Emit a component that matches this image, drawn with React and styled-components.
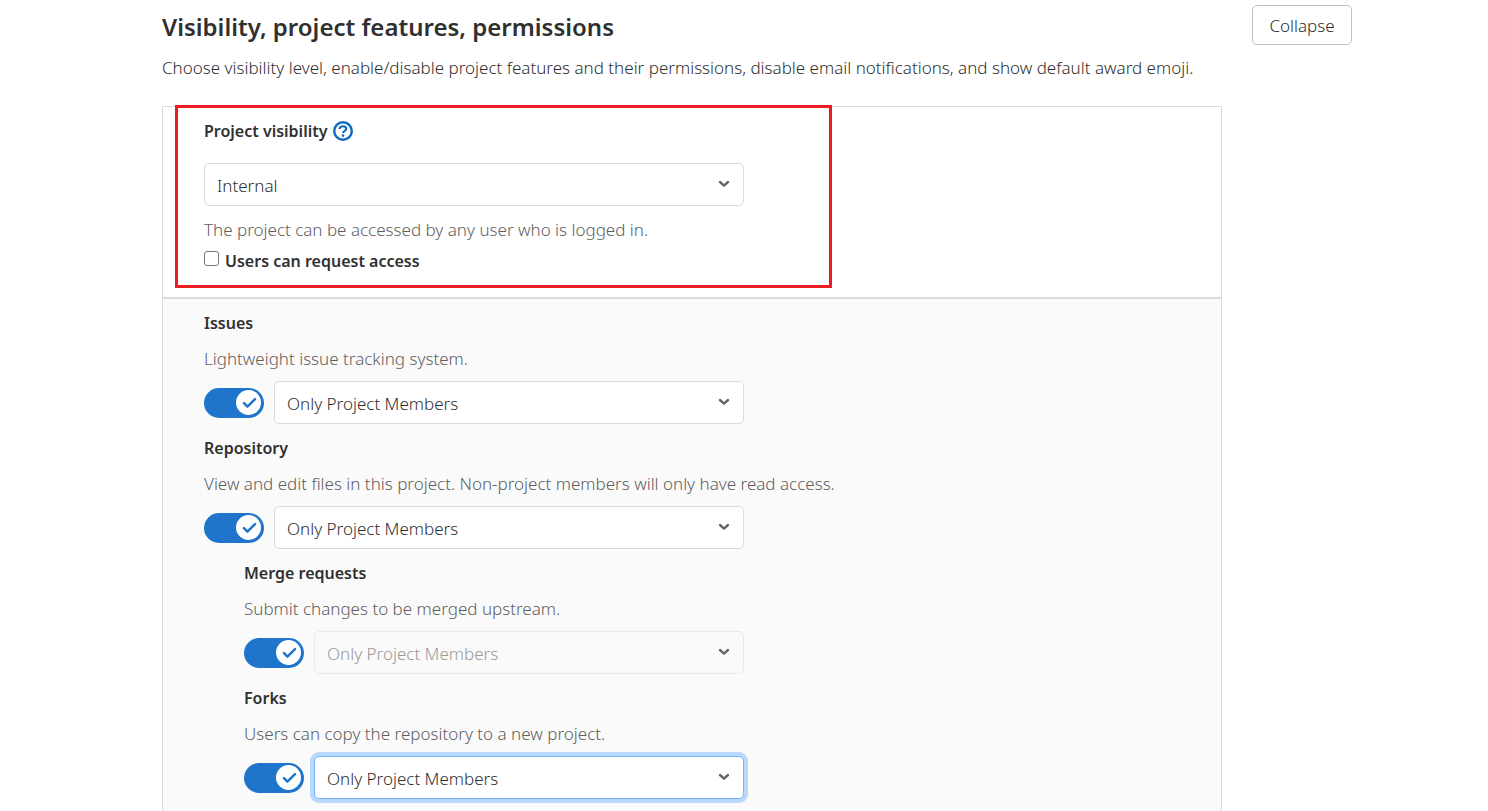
import React, { useState } from "react";
import styled, { createGlobalStyle, css } from "styled-components";

const GlobalStyle = createGlobalStyle`
  *, *::before, *::after { box-sizing: border-box; }
  body {
    margin: 0;
    background: #fff;
    color: #303030;
    font-family: "Segoe UI", "Noto Sans", "Open Sans", sans-serif;
    font-size: 17px;
    font-weight: 300;
    line-height: 24px;
  }
  h1, h2, p { margin: 0; }
  button, select, input { font: inherit; color: inherit; }
`;

const Page = styled.main`
  padding: 5px 136px 0 162px;
`;

const Header = styled.header`
  display: flex;
  justify-content: space-between;
  align-items: flex-start;
`;

const Title = styled.h1`
  padding-top: 6px;
  font-size: 24px;
  font-weight: 600;
  line-height: 32px;
`;

const CollapseButton = styled.button`
  min-width: 100px;
  height: 40px;
  padding: 2px 16px 0;
  border: 1px solid #bfbfbf;
  border-radius: 5px;
  background: #fff;
  cursor: pointer;
`;

const Intro = styled.p`
  margin-top: 11px;
`;

const Panel = styled.section`
  position: relative;
  max-width: 1060px;
  margin-top: 26px;
  border: 1px solid #dbdbdb;
  border-bottom: 0;
`;

const VisibilitySection = styled.div`
  padding: 12px 41px 24px;
  border-bottom: 2px solid #dbdbdb;
`;

const FeatureSection = styled.div`
  display: flex;
  flex-direction: column;
  gap: 12px;
  padding: 12px 41px;
  background: #fafafa;
`;

const Highlight = styled.div`
  position: absolute;
  top: -2px;
  left: 12px;
  width: 657px;
  height: 183px;
  border: 3px solid #ed1c24;
  pointer-events: none;
`;

const FieldHeading = styled.div`
  display: flex;
  align-items: center;
  gap: 6px;
`;

const FieldLabel = styled.label`
  font-size: 16px;
  font-weight: 600;
`;

const HelpLink = styled.a`
  display: flex;
  color: #1068bf;
`;

const HelpText = styled.p`
  color: #5e5e5e;
`;

const SelectWrap = styled.div`
  position: relative;
  flex: 1;
`;

const Select = styled.select`
  display: block;
  width: 100%;
  height: 43px;
  padding: 2px 40px 0 12px;
  border: 1px solid #dbdbdb;
  border-radius: 5px;
  outline: 0;
  background: #fff;
  appearance: none;

  &:disabled {
    border-color: #e9e9e9;
    background: #fafafa;
    color: #999;
    opacity: 1;
  }

  ${({ $active }) => $active && css`
    border-color: #73b3fb;
    box-shadow: 0 0 0 4px #b9d8fb;
  `}
`;

const Chevron = styled.svg`
  position: absolute;
  top: 17px;
  right: 14px;
  pointer-events: none;
`;

const VisibilityControl = styled.div`
  display: flex;
  max-width: 540px;
  margin: 20px 0 12px;
`;

const CheckboxRow = styled.div`
  display: flex;
  align-items: center;
  gap: 6px;
  margin-top: 7px;
`;

const Checkbox = styled.input`
  appearance: none;
  width: 15px;
  height: 15px;
  margin: 0 0 5px;
  border: 1px solid #767676;
  border-radius: 3px;
  background: #fff;

  &:checked { background: #1f75cb; }
`;

const Feature = styled.div`
  padding-left: ${({ $nested }) => ($nested ? "40px" : "0")};
`;

const FeatureText = styled(HelpText)`
  margin: 12px 0 10px;
`;

const Controls = styled.div`
  display: flex;
  align-items: center;
  gap: 10px;
  max-width: ${({ $nested }) => ($nested ? "500px" : "540px")};
`;

const Toggle = styled.button`
  display: flex;
  justify-content: ${({ $on }) => ($on ? "flex-end" : "flex-start")};
  align-items: center;
  width: 60px;
  height: 30px;
  padding: 0 3px;
  border: 0;
  border-radius: 15px;
  background: ${({ $on }) => ($on ? "#1f75cb" : "#868686")};
  cursor: pointer;
`;

const ToggleKnob = styled.svg`
  display: block;
`;

const FEATURES = [
  { id: "issues", name: "Issues", text: "Lightweight issue tracking system." },
  {
    id: "repository",
    name: "Repository",
    text: "View and edit files in this project. Non-project members will only have read access.",
  },
  {
    id: "merge-requests",
    name: "Merge requests",
    text: "Submit changes to be merged upstream.",
    nested: true,
    disabled: true,
  },
  {
    id: "forks",
    name: "Forks",
    text: "Users can copy the repository to a new project.",
    nested: true,
    active: true,
  },
];

function Dropdown({ id, options, disabled, active }) {
  return (
    <SelectWrap>
      <Select id={id} disabled={disabled} $active={active} defaultValue={options[0]}>
        {options.map((option) => (
          <option key={option}>{option}</option>
        ))}
      </Select>
      <Chevron width="12" height="8" viewBox="0 0 12 8" fill="none" aria-hidden="true">
        <path d="M2 2 L6 5.6 L10 2" stroke="#666" strokeWidth="2.4" strokeLinecap="round" strokeLinejoin="round" />
      </Chevron>
    </SelectWrap>
  );
}

function FeatureRow({ id, name, text, nested, disabled, active }) {
  const [on, setOn] = useState(true);
  return (
    <Feature $nested={nested}>
      <FieldHeading>
        <FieldLabel htmlFor={id}>{name}</FieldLabel>
      </FieldHeading>
      <FeatureText>{text}</FeatureText>
      <Controls $nested={nested}>
        <Toggle type="button" role="switch" aria-checked={on} aria-label={name} $on={on} onClick={() => setOn(!on)}>
          <ToggleKnob width="25" height="25" viewBox="0 0 25 25" fill="none" aria-hidden="true">
            <circle cx="12.5" cy="12.5" r="12.5" fill="#fff" />
            {on && (
              <path d="M8 13.2 L11.4 16.6 L19 9.2" stroke="#1f75cb" strokeWidth="2.5" strokeLinecap="round" strokeLinejoin="round" />
            )}
          </ToggleKnob>
        </Toggle>
        <Dropdown id={id} options={["Only Project Members", "Everyone With Access"]} disabled={disabled} active={active} />
      </Controls>
    </Feature>
  );
}

export default function App() {
  return (
    <>
      <GlobalStyle />
      <Page>
        <Header>
          <Title>Visibility, project features, permissions</Title>
          <CollapseButton type="button">Collapse</CollapseButton>
        </Header>
        <Intro>
          Choose visibility level, enable/disable project features and their permissions, disable email
          notifications, and show default award emoji.
        </Intro>
        <Panel>
          <VisibilitySection>
            <FieldHeading>
              <FieldLabel htmlFor="visibility">Project visibility</FieldLabel>
              <HelpLink href="#visibility-help" aria-label="Help">
                <svg width="20" height="20" viewBox="0 0 20 20" fill="none" aria-hidden="true">
                  <circle cx="10" cy="10" r="8.8" stroke="currentColor" strokeWidth="2.4" />
                  <path d="M6.5 8 C6.7 6.2 8 5.2 10 5.2 C12 5.2 13.3 6.2 13.3 7.8 C13.3 9.8 10 9.8 10 12" stroke="currentColor" strokeWidth="2.1" />
                  <circle cx="10" cy="14.6" r="1.3" fill="currentColor" />
                </svg>
              </HelpLink>
            </FieldHeading>
            <VisibilityControl>
              <Dropdown id="visibility" options={["Internal", "Private", "Public"]} />
            </VisibilityControl>
            <HelpText>The project can be accessed by any user who is logged in.</HelpText>
            <CheckboxRow>
              <Checkbox type="checkbox" id="request-access" />
              <FieldLabel htmlFor="request-access">Users can request access</FieldLabel>
            </CheckboxRow>
          </VisibilitySection>
          <FeatureSection>
            {FEATURES.map((feature) => (
              <FeatureRow key={feature.id} {...feature} />
            ))}
          </FeatureSection>
          <Highlight />
        </Panel>
      </Page>
    </>
  );
}
